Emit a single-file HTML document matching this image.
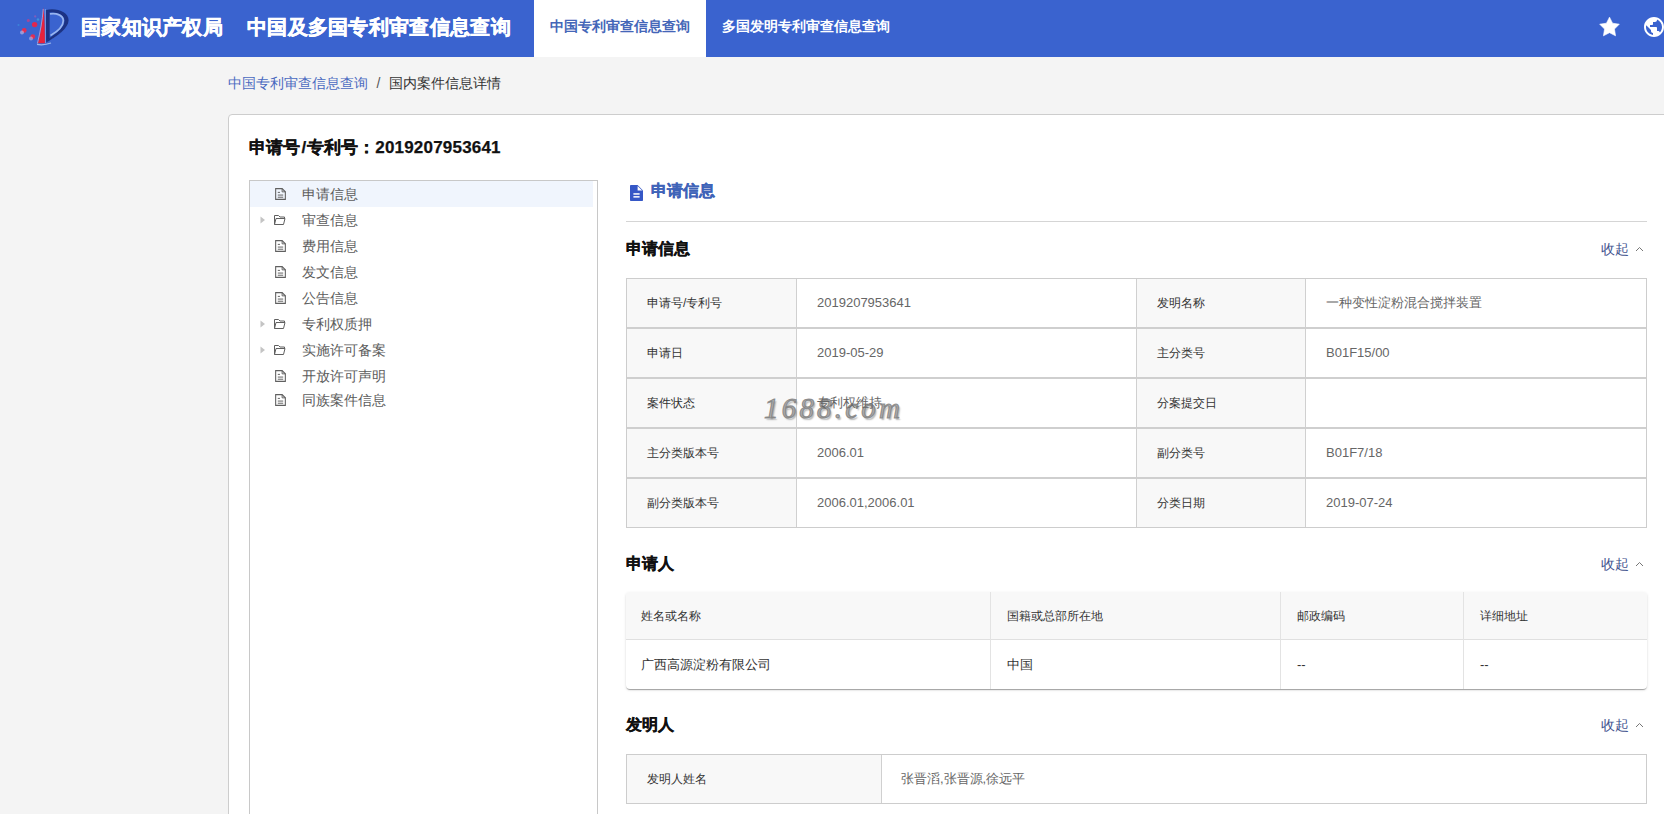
<!DOCTYPE html>
<html><head><meta charset="utf-8">
<style>
*{box-sizing:border-box;margin:0;padding:0}
html,body{width:1664px;height:814px;overflow:hidden;background:#f4f4f4;font-family:"Liberation Sans",sans-serif;color:#333}
.abs{position:absolute;white-space:nowrap}
#hdr{position:absolute;left:0;top:0;width:1664px;height:57px;background:#3a63cf}
.htitle{position:absolute;top:14px;font-size:20px;font-weight:bold;color:#fff;line-height:26px;-webkit-text-stroke:.5px #fff;letter-spacing:.3px}
.tab1{position:absolute;left:534px;top:0;width:172px;height:57px;background:#fff;color:#4466b8;font-size:14px;font-weight:bold;line-height:52px;text-align:center}
.tab2{position:absolute;left:722px;top:0;height:57px;color:#fff;font-size:14px;font-weight:bold;line-height:52px}
.crumb{position:absolute;top:73px;font-size:14px;line-height:20px}
#card{position:absolute;left:228px;top:114px;width:1460px;height:760px;background:#fff;border:1px solid #cdcdcd;border-radius:4px}
.ptitle{position:absolute;left:249px;top:136px;font-size:17px;font-weight:bold;color:#111;line-height:24px;-webkit-text-stroke:.25px #111}
#tree{position:absolute;left:249px;top:180px;width:349px;height:700px;border:1px solid #c8c8c8}
.ti{position:absolute;left:250px;width:347px;height:26px;font-size:14px;color:#5c5c5c;line-height:26px}
.ti .tx{position:absolute;left:51.5px;top:0}
.ti .ic{position:absolute;line-height:0}
.sec{position:absolute;left:626px;font-size:16px;font-weight:bold;color:#111;line-height:22px;-webkit-text-stroke:.3px #111}
.fold{position:absolute;left:1601px;font-size:14px;color:#43548f;line-height:20px;margin-top:1px}
.chev{position:absolute;left:1635px}
table{position:absolute;border-collapse:collapse;font-size:13px}
.t1 td{border:1px solid #cfcfcf;height:50px;padding-left:20px;color:#666}
.t1 td.l{background:#f7f7f7;color:#333;font-size:12px}
.box{position:absolute;box-sizing:border-box}
.lab{position:absolute;white-space:nowrap;height:50px;line-height:50px;font-size:12px;color:#333}
.val{position:absolute;z-index:1;white-space:nowrap;height:50px;line-height:50px;font-size:13px;color:#666}
.th2{position:absolute;white-space:nowrap;height:48px;line-height:48px;font-size:12px;color:#333}
.td2{position:absolute;white-space:nowrap;height:48px;line-height:48px;font-size:13px;color:#333}
.wm{position:absolute;left:764px;top:388px;z-index:0;font-family:"Liberation Serif",serif;font-style:italic;font-weight:normal;font-size:29px;letter-spacing:3.2px;color:rgba(165,165,165,.9);-webkit-text-stroke:1.1px rgba(125,125,125,.8);text-shadow:1.5px 1.5px 1.5px rgba(0,0,0,.3);line-height:40px}
</style></head><body>
<div id="hdr">
  <svg class="abs" style="left:0;top:0" width="80" height="57" viewBox="0 0 80 57">
    <defs><filter id="sb" x="-10%" y="-10%" width="120%" height="120%"><feGaussianBlur stdDeviation=".35"/></filter></defs>
    <g filter="url(#sb)">
    <path d="M49.5 39.5 C56 36 62.5 31 66.5 25.5" fill="none" stroke="#86a6ee" stroke-width="1.2" opacity=".7"/>
    <path d="M46 10 C56 7.6 69 11.5 68.6 20.5 C68.2 29 57 36 46.5 42.5 L49.5 38 C57 33 64.5 27 64.5 20.5 C64.5 14.5 56.5 11.6 49.2 12.6 Z" fill="#1a3384"/>
    <path d="M45.8 10 L49.6 10.4 L49.6 38.5 L46.2 42.8 Z" fill="#1a3384"/>
    <path d="M50 13.9 C56.5 12.9 63.3 15.2 63.3 20.7 C63.3 26.2 57.2 31.6 50.5 35.6" fill="none" stroke="#a9c3f5" stroke-width="1.7" opacity=".85"/>
    <path d="M45.3 9 L45.3 43" stroke="#9ab8f0" stroke-width=".9" opacity=".8"/>
    <path d="M43.6 7.3 C43.1 18 41 31 38.1 43.2 L44.9 43.2 C44.9 31 44.5 18 43.6 7.3 Z" fill="#e8213a"/>
    <path d="M43.2 9 C42.5 20 40.2 32 37.4 43.5" fill="none" stroke="#e6b4d2" stroke-width=".8" opacity=".8"/>
    <path d="M37 44.4 Q44 45.6 51 43" fill="none" stroke="#b5cdf5" stroke-width="1.3" opacity=".8"/>
    <circle cx="34.6" cy="24.6" r="2.7" fill="#e0284f"/>
    <circle cx="24.2" cy="30.4" r="2.4" fill="#df2f55"/>
    <circle cx="32.8" cy="36.6" r="2.4" fill="#df2f55"/>
    <circle cx="28.3" cy="20.4" r="1.5" fill="#c0408a" opacity=".8"/>
    <circle cx="35.2" cy="16.4" r="1.1" fill="#a05ab5" opacity=".7"/>
    <circle cx="22" cy="32.5" r="2" fill="#d8c8e8" opacity=".55"/>
    <circle cx="31" cy="38.5" r="2" fill="#d8c8e8" opacity=".5"/>
    <circle cx="38" cy="19.5" r="1.2" fill="#3fb0e0" opacity=".6"/>
    <circle cx="18.5" cy="25" r="1" fill="#3a9ae0" opacity=".6"/>
    </g>
  </svg>
  <div class="htitle" style="left:81px">国家知识产权局</div>
  <div class="htitle" style="left:247px">中国及多国专利审查信息查询</div>
  <div class="tab1">中国专利审查信息查询</div>
  <div class="tab2">多国发明专利审查信息查询</div>
  <svg class="abs" style="left:1596.5px;top:13.6px" width="25" height="25" viewBox="0 0 24 24"><path fill="#fff" stroke="#fff" stroke-width=".6" stroke-linejoin="round" d="M12.00 3.00 L14.94 8.85 L21.40 9.75 L16.76 14.45 L17.80 20.95 L12.00 17.90 L6.20 20.95 L7.24 14.45 L2.60 9.75 L9.06 8.85Z"/></svg>
  <svg class="abs" style="left:1642px;top:15px" width="24" height="24" viewBox="0 0 24 24"><path fill="#fff" d="M12 2C6.48 2 2 6.48 2 12s4.48 10 10 10 10-4.48 10-10S17.52 2 12 2zm-1 17.93c-3.95-.49-7-3.85-7-7.93 0-.62.08-1.21.21-1.79L9 15v1c0 1.1.9 2 2 2v1.93zm6.9-2.54c-.26-.81-1-1.39-1.9-1.39h-1v-3c0-.55-.45-1-1-1H8v-2h2c.55 0 1-.45 1-1V7h2c1.1 0 2-.9 2-2v-.41c2.93 1.19 5 4.06 5 7.41 0 2.08-.8 3.97-2.1 5.39z"/></svg>
</div>

<div class="crumb" style="left:228px;color:#4a6ac0">中国专利审查信息查询</div>
<div class="crumb" style="left:376.5px;color:#555">/</div>
<div class="crumb" style="left:389px;color:#333">国内案件信息详情</div>

<div id="card"></div>
<div class="ptitle">申请号<span style="margin:0 1px 0 1.5px">/</span>专利号：<span style="letter-spacing:.2px">2019207953641</span></div>

<div id="tree"></div>
<div class="ti" style="top:181px;background:#f0f5fd;width:343px"><span class="ic" style="left:24px;top:6px"><svg width="13" height="14" viewBox="0 0 12 13"><path d="M1.5 1.5h6l3 3v7h-9z" fill="none" stroke="#606060" stroke-width="1" stroke-linejoin="miter"/><path d="M7.5 1.5v3h3" fill="none" stroke="#606060" stroke-width=".9"/><path d="M3.5 5h2M3.5 7.5h5M3.5 9.5h5" stroke="#606060" stroke-width=".9"/></svg></span><span class="tx">申请信息</span></div>
<div class="ti" style="top:207px"><span class="ic" style="left:10px;top:9px"><svg width="6" height="8" viewBox="0 0 6 8"><path d="M0.5 0.5L5 4 0.5 7.5z" fill="#c4c4c4"/></svg></span><span class="ic" style="left:23px;top:7px"><svg width="13" height="12" viewBox="0 0 13 12"><path d="M1.5 10.5V1.5h4l1.5 1.5h4.5v1.5" fill="none" stroke="#606060" stroke-width="1"/><path d="M1.5 10.5l1.5-6h9l-1.5 6z" fill="none" stroke="#606060" stroke-width="1" stroke-linejoin="round"/></svg></span><span class="tx">审查信息</span></div>
<div class="ti" style="top:233px"><span class="ic" style="left:24px;top:6px"><svg width="13" height="14" viewBox="0 0 12 13"><path d="M1.5 1.5h6l3 3v7h-9z" fill="none" stroke="#606060" stroke-width="1" stroke-linejoin="miter"/><path d="M7.5 1.5v3h3" fill="none" stroke="#606060" stroke-width=".9"/><path d="M3.5 5h2M3.5 7.5h5M3.5 9.5h5" stroke="#606060" stroke-width=".9"/></svg></span><span class="tx">费用信息</span></div>
<div class="ti" style="top:259px"><span class="ic" style="left:24px;top:6px"><svg width="13" height="14" viewBox="0 0 12 13"><path d="M1.5 1.5h6l3 3v7h-9z" fill="none" stroke="#606060" stroke-width="1" stroke-linejoin="miter"/><path d="M7.5 1.5v3h3" fill="none" stroke="#606060" stroke-width=".9"/><path d="M3.5 5h2M3.5 7.5h5M3.5 9.5h5" stroke="#606060" stroke-width=".9"/></svg></span><span class="tx">发文信息</span></div>
<div class="ti" style="top:285px"><span class="ic" style="left:24px;top:6px"><svg width="13" height="14" viewBox="0 0 12 13"><path d="M1.5 1.5h6l3 3v7h-9z" fill="none" stroke="#606060" stroke-width="1" stroke-linejoin="miter"/><path d="M7.5 1.5v3h3" fill="none" stroke="#606060" stroke-width=".9"/><path d="M3.5 5h2M3.5 7.5h5M3.5 9.5h5" stroke="#606060" stroke-width=".9"/></svg></span><span class="tx">公告信息</span></div>
<div class="ti" style="top:311px"><span class="ic" style="left:10px;top:9px"><svg width="6" height="8" viewBox="0 0 6 8"><path d="M0.5 0.5L5 4 0.5 7.5z" fill="#c4c4c4"/></svg></span><span class="ic" style="left:23px;top:7px"><svg width="13" height="12" viewBox="0 0 13 12"><path d="M1.5 10.5V1.5h4l1.5 1.5h4.5v1.5" fill="none" stroke="#606060" stroke-width="1"/><path d="M1.5 10.5l1.5-6h9l-1.5 6z" fill="none" stroke="#606060" stroke-width="1" stroke-linejoin="round"/></svg></span><span class="tx">专利权质押</span></div>
<div class="ti" style="top:337px"><span class="ic" style="left:10px;top:9px"><svg width="6" height="8" viewBox="0 0 6 8"><path d="M0.5 0.5L5 4 0.5 7.5z" fill="#c4c4c4"/></svg></span><span class="ic" style="left:23px;top:7px"><svg width="13" height="12" viewBox="0 0 13 12"><path d="M1.5 10.5V1.5h4l1.5 1.5h4.5v1.5" fill="none" stroke="#606060" stroke-width="1"/><path d="M1.5 10.5l1.5-6h9l-1.5 6z" fill="none" stroke="#606060" stroke-width="1" stroke-linejoin="round"/></svg></span><span class="tx">实施许可备案</span></div>
<div class="ti" style="top:363px"><span class="ic" style="left:24px;top:6px"><svg width="13" height="14" viewBox="0 0 12 13"><path d="M1.5 1.5h6l3 3v7h-9z" fill="none" stroke="#606060" stroke-width="1" stroke-linejoin="miter"/><path d="M7.5 1.5v3h3" fill="none" stroke="#606060" stroke-width=".9"/><path d="M3.5 5h2M3.5 7.5h5M3.5 9.5h5" stroke="#606060" stroke-width=".9"/></svg></span><span class="tx">开放许可声明</span></div>
<div class="ti" style="top:387px"><span class="ic" style="left:24px;top:6px"><svg width="13" height="14" viewBox="0 0 12 13"><path d="M1.5 1.5h6l3 3v7h-9z" fill="none" stroke="#606060" stroke-width="1" stroke-linejoin="miter"/><path d="M7.5 1.5v3h3" fill="none" stroke="#606060" stroke-width=".9"/><path d="M3.5 5h2M3.5 7.5h5M3.5 9.5h5" stroke="#606060" stroke-width=".9"/></svg></span><span class="tx">同族案件信息</span></div>

<svg class="abs" style="left:629.5px;top:185px" width="13" height="16" viewBox="0 0 13 16"><path d="M0.8 0H7.6L13 5.4V15.2Q13 16 12.2 16H0.8Q0 16 0 15.2V0.8Q0 0 0.8 0Z" fill="#3557c6"/><path d="M7.6 0.9V5.4H12.1Z" fill="#fff"/><rect x="3.4" y="8.2" width="6.2" height="1.5" fill="#fff"/><rect x="3.4" y="11.1" width="6.2" height="1.5" fill="#fff"/></svg>
<div class="abs" style="left:651px;top:180px;font-size:16px;font-weight:bold;color:#3f63b8;line-height:22px;-webkit-text-stroke:.3px #3f63b8">申请信息</div>
<div class="abs" style="left:626px;top:221px;width:1021px;height:1px;background:#d5d5d5"></div>

<div class="sec" style="top:238px">申请信息</div>
<div class="fold" style="top:238px">收起</div>
<svg class="chev" style="top:246px" width="9" height="6" viewBox="0 0 9 6"><path d="M1 5L4.5 1.5 8 5" fill="none" stroke="#666" stroke-width=".9"/></svg>

<div class="box" style="left:626px;top:278px;width:1021px;height:250px;border:1px solid #cdcdcd"></div>
<div class="abs" style="left:627px;top:279px;width:169px;height:248px;background:#f8f8f8"></div>
<div class="abs" style="left:1137px;top:279px;width:168px;height:248px;background:#f8f8f8"></div>
<div class="abs" style="left:796px;top:279px;width:1px;height:248px;background:#d0d0d0"></div>
<div class="abs" style="left:1136px;top:279px;width:1px;height:248px;background:#d0d0d0"></div>
<div class="abs" style="left:1305px;top:279px;width:1px;height:248px;background:#d0d0d0"></div>
<div class="abs" style="left:627px;top:327px;width:1019px;height:2px;background:#cfcfcf"></div>
<div class="abs" style="left:627px;top:377px;width:1019px;height:2px;background:#cfcfcf"></div>
<div class="abs" style="left:627px;top:427px;width:1019px;height:2px;background:#cfcfcf"></div>
<div class="abs" style="left:627px;top:477px;width:1019px;height:2px;background:#cfcfcf"></div>
<div class="lab" style="left:647px;top:278px">申请号/专利号</div>
<div class="val" style="left:817px;top:278px">2019207953641</div>
<div class="lab" style="left:1157px;top:278px">发明名称</div>
<div class="val" style="left:1326px;top:278px">一种变性淀粉混合搅拌装置</div>
<div class="lab" style="left:647px;top:328px">申请日</div>
<div class="val" style="left:817px;top:328px">2019-05-29</div>
<div class="lab" style="left:1157px;top:328px">主分类号</div>
<div class="val" style="left:1326px;top:328px">B01F15/00</div>
<div class="lab" style="left:647px;top:378px">案件状态</div>
<div class="val" style="left:817px;top:378px">专利权维持</div>
<div class="lab" style="left:1157px;top:378px">分案提交日</div>
<div class="val" style="left:1326px;top:378px"></div>
<div class="lab" style="left:647px;top:428px">主分类版本号</div>
<div class="val" style="left:817px;top:428px">2006.01</div>
<div class="lab" style="left:1157px;top:428px">副分类号</div>
<div class="val" style="left:1326px;top:428px">B01F7/18</div>
<div class="lab" style="left:647px;top:478px">副分类版本号</div>
<div class="val" style="left:817px;top:478px">2006.01,2006.01</div>
<div class="lab" style="left:1157px;top:478px">分类日期</div>
<div class="val" style="left:1326px;top:478px">2019-07-24</div>
<div class="wm">1688.com</div>
<div class="sec" style="top:553px">申请人</div>
<div class="fold" style="top:553px">收起</div>
<svg class="chev" style="top:561px" width="9" height="6" viewBox="0 0 9 6"><path d="M1 5L4.5 1.5 8 5" fill="none" stroke="#666" stroke-width=".9"/></svg>
<div class="box" style="left:626px;top:592px;width:1021px;height:97px;border-radius:4px;box-shadow:0 2px 1px -1px rgba(0,0,0,.2),0 1px 1px 0 rgba(0,0,0,.14),0 1px 3px 0 rgba(0,0,0,.12);background:#fff;overflow:hidden"><div style="height:48px;background:#f8f8f8;border-bottom:1px solid #e0e0e0"></div></div>
<div class="abs" style="left:990px;top:592px;width:1px;height:97px;background:#e3e3e3"></div>
<div class="abs" style="left:1280px;top:592px;width:1px;height:97px;background:#e3e3e3"></div>
<div class="abs" style="left:1463px;top:592px;width:1px;height:97px;background:#e3e3e3"></div>
<div class="th2" style="left:641px;top:592px">姓名或名称</div>
<div class="th2" style="left:1007px;top:592px">国籍或总部所在地</div>
<div class="th2" style="left:1297px;top:592px">邮政编码</div>
<div class="th2" style="left:1480px;top:592px">详细地址</div>
<div class="td2" style="left:641px;top:641px">广西高源淀粉有限公司</div>
<div class="td2" style="left:1007px;top:641px">中国</div>
<div class="td2" style="left:1297px;top:641px">--</div>
<div class="td2" style="left:1480px;top:641px">--</div>
<div class="sec" style="top:714px">发明人</div>
<div class="fold" style="top:714px">收起</div>
<svg class="chev" style="top:722px" width="9" height="6" viewBox="0 0 9 6"><path d="M1 5L4.5 1.5 8 5" fill="none" stroke="#666" stroke-width=".9"/></svg>
<div class="box" style="left:626px;top:754px;width:1021px;height:50px;border:1px solid #cdcdcd"></div>
<div class="abs" style="left:627px;top:755px;width:254px;height:48px;background:#f8f8f8"></div>
<div class="abs" style="left:881px;top:755px;width:1px;height:48px;background:#d0d0d0"></div>
<div class="lab" style="left:647px;top:754px">发明人姓名</div>
<div class="val" style="left:901px;top:754px">张晋滔,张晋源,徐远平</div>
</body></html>
